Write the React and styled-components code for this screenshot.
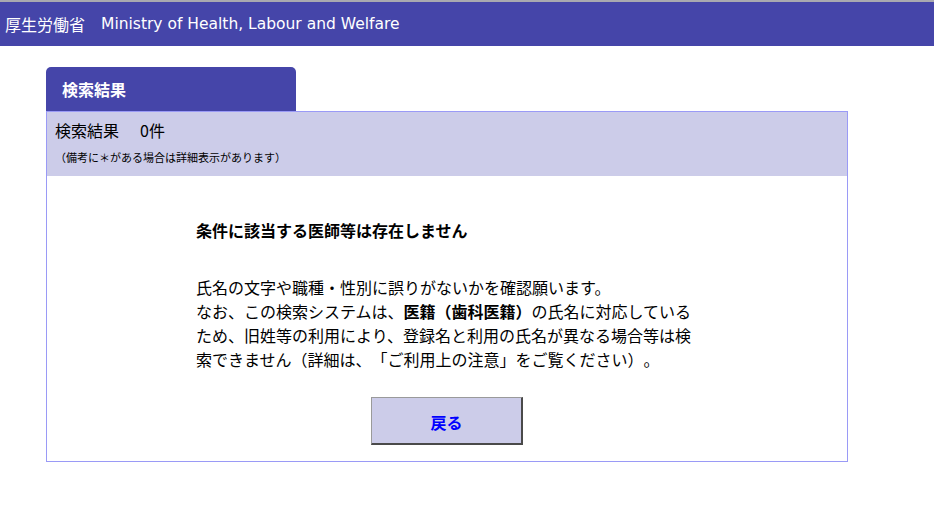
import React from "react";
import styled, { createGlobalStyle } from "styled-components";

const GlobalStyle = createGlobalStyle`
  html, body {
    margin: 0;
    padding: 0;
    background: #ffffff;
  }
  body {
    font-family: "Noto Sans CJK JP", "DejaVu Sans", sans-serif;
    color: #000000;
    text-spacing-trim: space-all;
  }
`;

const StyledHeader = styled.header`
  display: flex;
  align-items: center;
  box-sizing: border-box;
  height: 46px;
  border-top: 2px solid #a9a9b0;
  background: #4545a9;
  padding: 0 0 1px 5px;
  color: #ffffff;
  font-size: 16px;
`;

const StyledEnglish = styled.span`
  margin-left: 16px;
  font-family: "DejaVu Sans", sans-serif;
  font-size: 15.5px;
`;

const StyledMain = styled.main`
  display: flex;
  flex-direction: column;
  width: 802px;
  margin: 21px 0 0 46px;
`;

const StyledTab = styled.div`
  display: flex;
  align-items: center;
  box-sizing: border-box;
  width: 250px;
  height: 44px;
  padding: 0 0 0 16px;
  border-radius: 5px 5px 0 0;
  background: #4545a9;
  color: #ffffff;
  font-size: 16px;
  font-weight: bold;
`;

const StyledPanel = styled.section`
  display: flex;
  flex-direction: column;
  border: 1px solid #9a9af6;
`;

const StyledSummary = styled.div`
  display: flex;
  flex-direction: column;
  box-sizing: border-box;
  height: 64px;
  padding: 8px 0 0 8px;
  background: #cccce9;
`;

const StyledCount = styled.div`
  display: flex;
  gap: 21px;
  font-size: 16px;
  line-height: 20px;
`;

const StyledNote = styled.div`
  margin-top: 9px;
  font-size: 11px;
  line-height: 16px;
`;

const StyledBody = styled.div`
  display: flex;
  flex-direction: column;
  align-items: center;
  padding: 42px 0 16px;
  background: #ffffff;
`;

const StyledMessage = styled.div`
  display: flex;
  flex-direction: column;
  width: 500px;
  margin-left: -2px;
`;

const StyledTitle = styled.p`
  margin: 0;
  font-size: 16px;
  line-height: 24px;
  font-weight: bold;
`;

const StyledText = styled.p`
  margin: 33px 0 0;
  font-size: 16px;
  line-height: 24px;
`;

const StyledButton = styled.button`
  box-sizing: border-box;
  width: 152px;
  height: 48px;
  margin-top: 26px;
  padding: 2px 0 0;
  border-style: solid;
  border-width: 1px 2px 2px 1px;
  border-color: #9a9a9a #4a4a4a #4a4a4a #9a9a9a;
  background: #cccce9;
  color: #0000ff;
  font-family: "Noto Sans CJK JP", sans-serif;
  font-size: 16px;
  font-weight: bold;
  cursor: pointer;
`;

const App = () => {
  return (
    <>
      <GlobalStyle />
      <StyledHeader>
        厚生労働省<StyledEnglish>Ministry of Health, Labour and Welfare</StyledEnglish>
      </StyledHeader>
      <StyledMain>
        <StyledTab>検索結果</StyledTab>
        <StyledPanel>
          <StyledSummary>
            <StyledCount>
              <span>検索結果</span>
              <span>0件</span>
            </StyledCount>
            <StyledNote>（備考に＊がある場合は詳細表示があります）</StyledNote>
          </StyledSummary>
          <StyledBody>
            <StyledMessage>
              <StyledTitle>条件に該当する医師等は存在しません</StyledTitle>
              <StyledText>
                氏名の文字や職種・性別に誤りがないかを確認願います。
                <br />
                なお、この検索システムは、<b>医籍（歯科医籍）</b>の氏名に対応しているため、旧姓等の利用により、登録名と利用の氏名が異なる場合等は検索できません（詳細は、「ご利用上の注意」をご覧ください）。
              </StyledText>
            </StyledMessage>
            <StyledButton>戻る</StyledButton>
          </StyledBody>
        </StyledPanel>
      </StyledMain>
    </>
  );
};

export default App;
